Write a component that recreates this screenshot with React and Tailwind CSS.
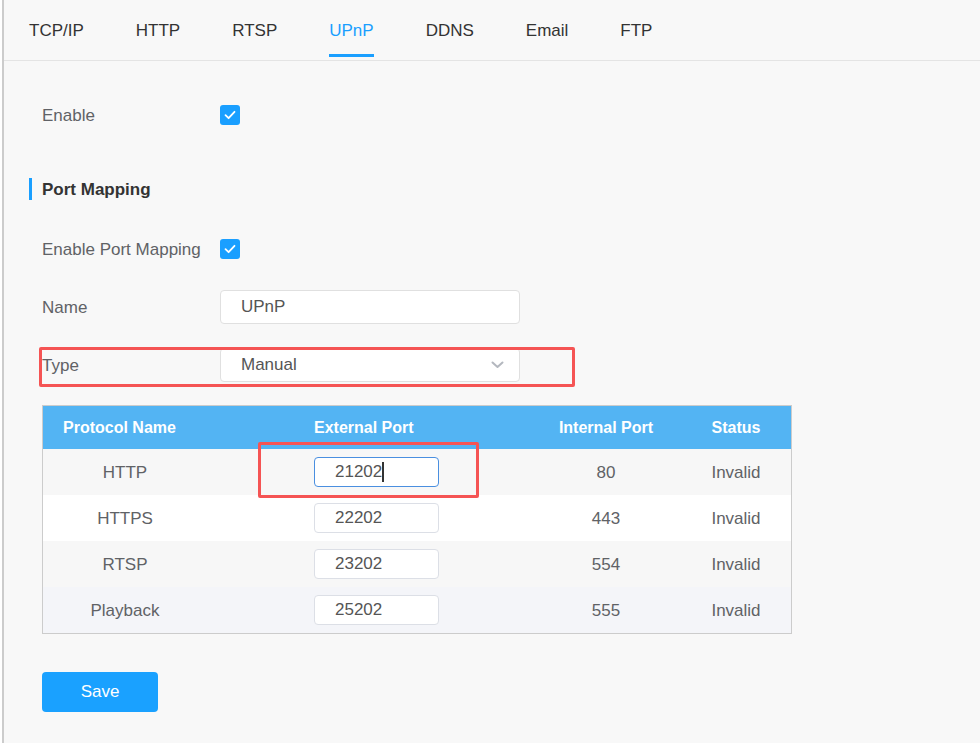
import React from "react";

const tabs = ["TCP/IP", "HTTP", "RTSP", "UPnP", "DDNS", "Email", "FTP"];

const rows = [
  { name: "HTTP", ext: "21202", int: "80", bg: "bg-[#f7f7f7]", focus: true },
  { name: "HTTPS", ext: "22202", int: "443", bg: "bg-white" },
  { name: "RTSP", ext: "23202", int: "554", bg: "bg-[#f7f7f7]" },
  { name: "Playback", ext: "25202", int: "555", bg: "bg-[#f4f5f9]" },
];

const Checkbox = () => (
  <div className="w-5 h-5 rounded-[3px] bg-[#1a9fff] flex items-center justify-center">
    <svg width="14" height="14" viewBox="0 0 14 14" fill="none">
      <path d="M2.5 7.2 L5.6 10.2 L11.5 3.8" stroke="white" strokeWidth="1.8" strokeLinecap="round" strokeLinejoin="round" />
    </svg>
  </div>
);

const App = () => {
  return (
    <div
      className="min-h-[743px] bg-[#f8f8f8] ml-[2px] border-l-2 border-[#cccccc] text-[17px] text-[#606266]"
      style={{ fontFamily: '"Liberation Sans", Arial, sans-serif' }}
    >
      {/* tabs */}
      <div className="h-[61px] border-b border-[#e4e4e4] flex gap-[52px] pl-[25px]">
        {tabs.map((t) => (
          <div
            key={t}
            className={`relative h-full flex items-center ${
              t === "UPnP" ? "text-[#1a9fff]" : "text-[#333]"
            }`}
          >
            <span className="mt-[2px]">{t}</span>
            {t === "UPnP" && (
              <div className="absolute left-0 right-0 top-[54px] h-[3px] bg-[#1a9fff]" />
            )}
          </div>
        ))}
      </div>

      <div className="pl-[38px]">
        {/* enable */}
        <div className="mt-[34px] h-10 flex items-center">
          <div className="w-[178px] mt-[1px]">Enable</div>
          <Checkbox />
        </div>

        {/* section title */}
        <div className="mt-[43px] h-[22px] flex items-center relative">
          <div className="absolute -left-[13px] top-0 w-[3px] h-[22px] bg-[#1a9fff]" />
          <span className="font-bold text-[#333] mt-[1px]">Port Mapping</span>
        </div>

        <div className="mt-[29px] h-10 flex items-center">
          <div className="w-[178px] mt-[1px]">Enable Port Mapping</div>
          <Checkbox />
        </div>

        <div className="mt-[21px] h-[34px] flex items-center">
          <div className="w-[178px] mt-[1px]">Name</div>
          <div className="w-[300px] h-[34px] bg-white border border-[#e0e0e0] rounded-[4px] pl-5 flex items-center text-[#555]">
            UPnP
          </div>
        </div>

        <div className="mt-[24px] h-[34px] flex items-center relative">
          <div className="absolute -left-[3px] -top-[1px] w-[536px] h-[40px] border-[3px] border-[#f55454] rounded-[2px]" />
          <div className="w-[178px] mt-[1px]">Type</div>
          <div className="w-[300px] h-[34px] bg-white border border-[#e0e0e0] rounded-[4px] pl-5 pr-[15px] flex items-center justify-between text-[#555]">
            Manual
            <svg width="13" height="8" viewBox="0 0 13 8" fill="none">
              <path d="M1.5 1.5 L6.5 6 L11.5 1.5" stroke="#b4b8bf" strokeWidth="2" strokeLinecap="round" strokeLinejoin="round" />
            </svg>
          </div>
        </div>

        {/* table */}
        <div className="mt-[23px] w-[750px] border border-[#cccccc] relative">
          <div className="absolute left-[215px] top-[36px] w-[221px] h-[56px] border-[3px] border-[#f55454] rounded-[2px] z-10" />
          <div className="h-[43px] bg-[#53b4f3] flex items-center text-white font-bold text-[16px]">
            <div className="w-[164px] pl-5">Protocol Name</div>
            <div className="w-[338px] pl-[107px]">External Port</div>
            <div className="w-[122px] text-center">Internal Port</div>
            <div className="flex-1 pl-[14px] text-center">Status</div>
          </div>
          {rows.map((r) => (
            <div key={r.name} className={`h-[46px] flex items-center ${r.bg}`}>
              <div className="w-[164px] text-center mt-[1px]">{r.name}</div>
              <div className="w-[338px] pl-[107px]">
                <div
                  className={`w-[125px] h-[30px] bg-white rounded-[4px] border pl-5 flex items-center text-[#555] ${
                    r.focus ? "border-[#4a8fe0]" : "border-[#dcdfe6]"
                  }`}
                >
                  {r.ext}
                  {r.focus && <span className="w-[1.5px] h-[20px] bg-[#333]" />}
                </div>
              </div>
              <div className="w-[122px] text-center mt-[1px]">{r.int}</div>
              <div className="flex-1 pl-[14px] text-center mt-[1px]">Invalid</div>
            </div>
          ))}
        </div>

        <button className="mt-[38px] w-[116px] h-10 rounded-[4px] bg-[#1aa1ff] text-white text-[17px]">
          Save
        </button>
      </div>
    </div>
  );
};

export default App;
